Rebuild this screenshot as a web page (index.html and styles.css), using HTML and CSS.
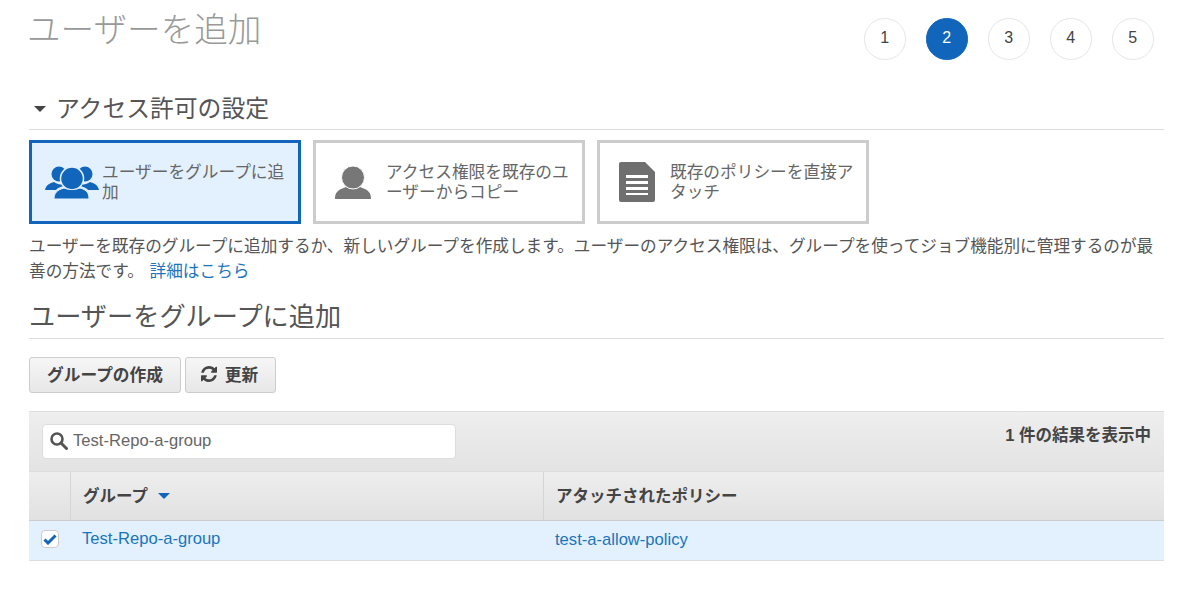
FILE: index.html
```html
<!DOCTYPE html>
<html lang="ja">
<head>
<meta charset="utf-8">
<title>ユーザーを追加</title>
<link rel="stylesheet" href="styles.css">
</head>
<body>
<header class="top">
  <h1 class="title">ユーザーを追加</h1>
  <ol class="steps">
    <li class="step">1</li>
    <li class="step step-on">2</li>
    <li class="step">3</li>
    <li class="step">4</li>
    <li class="step">5</li>
  </ol>
</header>
<h2 class="section section-access"><span class="caret"></span>アクセス許可の設定</h2>
<div class="cards">
  <div class="card card-on">
    <svg class="card-icon icon-group" viewBox="0 0 54 33"><g fill="#1166bb"><circle cx="14" cy="8" r="7.500"/><circle cx="40" cy="8" r="7.500"/><path d="M0 24c1-5 5-7 9-8 3 2 6 3 9 2l1 2c-4 1-7 2-8 4z"/><path d="M54 24c-1-5-5-7-9-8-3 2-6 3-9 2l-1 2c4 1 7 2 8 4z"/></g><circle cx="27" cy="12.500" r="11.500" fill="#1166bb" stroke="#e3f1ff" stroke-width="1.500"/><path d="M9 33c0-6 3-9 10-11 5 2 11 2 16 0 7 2 9 5 9 11z" fill="#1166bb" stroke="#e3f1ff" stroke-width="1"/></svg>
    <span class="card-text">ユーザーをグループに追加</span>
  </div>
  <div class="card">
    <svg class="card-icon icon-user" viewBox="0 0 36 33"><path d="M0 33c0-6 2-9 11-12 4 2.500 10 2.500 14 0 9 3 11 6 11 12z" fill="#777"/><circle cx="18" cy="11.500" r="11.500" fill="#777" stroke="#fff" stroke-width="1"/></svg>
    <span class="card-text">アクセス権限を既存のユーザーからコピー</span>
  </div>
  <div class="card">
    <svg class="card-icon icon-doc" viewBox="0 0 36 40"><path d="M2 0h24l10 10v28a2 2 0 0 1-2 2H2a2 2 0 0 1-2-2V2a2 2 0 0 1 2-2z" fill="#6f6f6f"/><path d="M7 13h22v3H7zM7 19h22v3H7zM7 25h22v3H7zM7 31h22v2H7z" fill="#fff"/></svg>
    <span class="card-text">既存のポリシーを直接アタッチ</span>
  </div>
</div>
<p class="desc">ユーザーを既存のグループに追加するか、新しいグループを作成します。ユーザーのアクセス権限は、グループを使ってジョブ機能別に管理するのが最善の方法です。 <a class="link desc-link">詳細はこちら</a></p>
<h2 class="section section-add">ユーザーをグループに追加</h2>
<div class="buttons">
  <button class="btn btn-create">グループの作成</button>
  <button class="btn btn-refresh"><svg class="refresh-icon" viewBox="0 0 1536 1536"><path fill="#444" d="M1511 928q0 5-1 7-64 268-268 434.500T764 1536q-146 0-282.500-55T238 1324l-129 129q-19 19-45 19t-45-19-19-45V960q0-26 19-45t45-19h448q26 0 45 19t19 45-19 45L420 1142q71 66 161 102t187 36q134 0 250-65t186-179q11-17 53-117 8-23 30-23h192q13 0 22.500 9.500t9.500 22.500zm25-800v448q0 26-19 45t-45 19h-448q-26 0-45-19t-19-45 19-45l138-138q-148-137-349-137-134 0-250 65T332 500q-11 17-53 117-8 23-30 23H50q-13 0-22.500-9.500T18 608v-7q65-268 270-434.500T768 0q146 0 284 55.500T1297 212l130-129q19-19 45-19t45 19 19 45z"/></svg>更新</button>
</div>
<section class="table">
  <div class="filter">
    <div class="search">
      <svg class="search-icon" viewBox="0 0 18 18"><circle cx="7" cy="7" r="5.500" fill="none" stroke="#555" stroke-width="2.600"/><path d="M11 11l5.500 5.500" stroke="#555" stroke-width="3" stroke-linecap="round"/></svg>
      <span class="search-text">Test-Repo-a-group</span>
    </div>
    <div class="count">1 件の結果を表示中</div>
  </div>
  <div class="row head">
    <div class="cell-check"></div>
    <div class="cell-group">グループ<span class="sort"></span></div>
    <div class="cell-policy">アタッチされたポリシー</div>
  </div>
  <div class="row body-row">
    <div class="cell-check check-value"><span class="checkbox"><svg viewBox="0 0 14 12"><path d="M1.500 6.500l3.500 3.500L12.500 2.500" fill="none" stroke="#1166bb" stroke-width="3"/></svg></span></div>
    <div class="cell-group group-value"><a class="link">Test-Repo-a-group</a></div>
    <div class="cell-policy policy-value"><a class="link">test-a-allow-policy</a></div>
  </div>
</section>
</body>
</html>
```
FILE: styles.css
```css
* { box-sizing: border-box; }
html, body { margin: 0; height: 594px; overflow: hidden; }
body {
  padding: 0 36px 0 29px;
  background: #fff;
  color: #444;
  font-family: "Liberation Sans", "Noto Sans CJK JP", sans-serif;
  font-size: 15px;
}
.top { display: flex; justify-content: space-between; align-items: flex-start; height: 73px; padding-right: 10.500px; }
.title { margin: 6px 0 0 -2px; font-size: 33.600px; line-height: 44px; font-weight: 300; color: #999; font-family: "Noto Sans CJK JP", sans-serif; }
.steps { display: flex; gap: 20.500px; margin: 18px 0 0; padding: 0; list-style: none; }
.step {
  width: 41.500px; height: 41.500px; border: 1px solid #e6e6e6; border-radius: 50%;
  display: flex; align-items: center; justify-content: center;
  font-size: 16px; color: #444; padding-bottom: 1px;
}
.step-on { background: #1166bb; border-color: #1166bb; color: #fff; }
.section {
  margin: 0; border-bottom: 1px solid #ddd; font-weight: 400; color: #555;
  font-family: "Noto Sans CJK JP", sans-serif;
}
.section-access { display: flex; align-items: center; height: 57px; padding-top: 11px; font-size: 23.800px; }
.caret {
  width: 0; height: 0; margin: 4px 10px 0 5px;
  border-left: 6px solid transparent; border-right: 6px solid transparent; border-top: 6px solid #444;
}
.cards { display: flex; gap: 12px; margin-top: 10px; }
.card {
  width: 272px; height: 84px; border: 3px solid #ccc; background: #fff;
  display: flex; align-items: center; position: relative;
  font-family: "Noto Sans CJK JP", sans-serif;
  font-size: 16.700px; line-height: 20px; color: #666;
}
.card-on { border-color: #1166bb; background: #e3f1ff; }
.card-text { flex: 1; min-width: 0; padding-bottom: 2px; }
.card-icon { flex: none; }
.icon-group { width: 54px; height: 33px; margin: 0 3px 0 13px; }
.icon-user { width: 36px; height: 33px; margin: 0 15px 0 19px; }
.icon-doc { width: 36px; height: 40px; margin: 0 15px 0 19px; }
.desc {
  margin: 9px 0 0; font-size: 16.650px; line-height: 25px; color: #555;
  font-family: "Noto Sans CJK JP", sans-serif;
}
.link { color: #1b75bb; }
.desc-link { margin-left: 2px; }
.section-add { height: 56px; padding-top: 14px; font-size: 26.200px; line-height: 36px; }
.buttons { display: flex; gap: 4px; margin-top: 18px; }
.btn {
  height: 36px; padding: 0 0 3px; border: 1px solid #ccc; border-radius: 3px;
  background: linear-gradient(#f6f6f6, #e7e7e7);
  display: flex; align-items: center; justify-content: center;
  font-family: "Noto Sans CJK JP", sans-serif; font-size: 16.700px; font-weight: 700; color: #444;
}
.btn-create { width: 152px; }
.btn-refresh { width: 91px; }
.refresh-icon { width: 16px; height: 16px; margin-right: 8px; margin-left: -2px; }
.table { margin-top: 18px; border-bottom: 1px solid #ddd; font-family: "Liberation Sans", "Noto Sans CJK JP", sans-serif; }
.filter {
  height: 60px; background: linear-gradient(#eee, #e3e3e3); border-top: 1px solid #ddd;
  display: flex; justify-content: space-between; align-items: flex-start;
  padding: 12px 13px 0 13px;
}
.search {
  width: 414px; height: 35px; background: #fff; border: 1px solid #ddd; border-radius: 4px;
  display: flex; align-items: center; padding: 0 0 1px 7px;
  font-size: 16.600px; color: #666;
}
.search-icon { width: 18px; height: 18px; margin-right: 5px; }
.count { margin-top: 1px; font-size: 16.500px; line-height: 20px; font-weight: 700; color: #444; }
.row { display: flex; }
.head {
  height: 50px; border-top: 1px solid #ddd; border-bottom: 1px solid #ccc;
  background: linear-gradient(#eee, #e1e1e1);
  font-size: 16.500px; font-weight: 700; color: #444;
}
.head .cell-group, .head .cell-policy { padding-bottom: 3px; border-left: 1px solid #d5d5d5; }
.cell-check { width: 41px; display: flex; align-items: center; justify-content: center; }
.cell-group { width: 473px; padding-left: 12px; display: flex; align-items: center; }
.cell-policy { flex: 1; padding-left: 12px; display: flex; align-items: center; }
.sort {
  width: 0; height: 0; margin: 3px 0 0 10px;
  border-left: 6px solid transparent; border-right: 6px solid transparent; border-top: 6px solid #1166bb;
}
.body-row { height: 39px; background: #e3f1ff; font-size: 16.600px; }
.check-value { padding-bottom: 4px; }
.group-value { padding: 0 0 4px 12px; }
.policy-value { padding-bottom: 2px; }
.checkbox {
  width: 18px; height: 18px; background: #fff; border: 1px solid #ccc; border-radius: 4px;
  display: flex; align-items: center; justify-content: center;
}
.checkbox svg { width: 14px; height: 12px; }
```
